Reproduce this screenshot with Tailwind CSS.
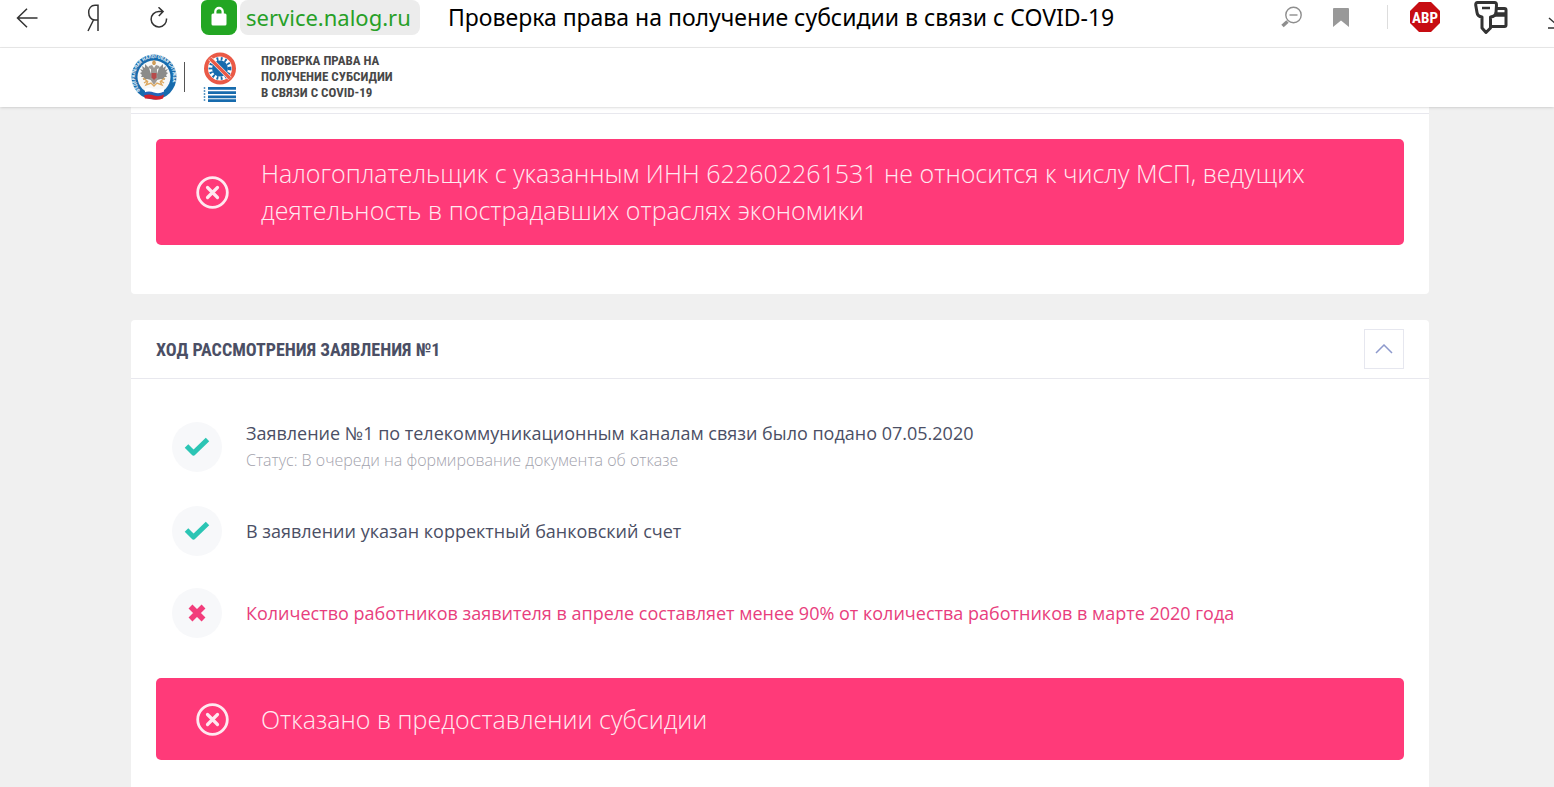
<!DOCTYPE html>
<html lang="ru">
<head>
    <meta charset="UTF-8">
    <meta name="viewport" content="width=device-width, initial-scale=1.0">
    <title>Проверка права на получение субсидии в связи с COVID-19</title>
    <script src="https://cdn.jsdelivr.net/npm/@tailwindcss/browser@4"></script>
</head>
<body class="min-h-screen flex flex-col overflow-x-hidden bg-[#f0f0f0] font-['Open_Sans','Noto_Sans',sans-serif] text-[#4b4f65]">
    <!-- Browser bar -->
    <div class="h-12 shrink-0 flex items-start overflow-hidden bg-white border-b border-[#e9e9e9] font-['Noto_Sans',sans-serif]">
        <div class="w-[201px] shrink-0 h-[35px] flex items-center justify-between pl-4 pr-8 text-[#333]">
            <button type="button" aria-label="Назад">
                <svg class="block" width="22" height="20" viewBox="0 0 22 20" fill="none" stroke="currentColor" stroke-width="1.5"><path d="M21.5 10H1.5M11 .7L1.5 10l9.5 9.300"/></svg>
            </button>
            <button type="button" aria-label="Яндекс">
                <svg class="block" width="14" height="28" viewBox="0 0 14 28" fill="none" stroke="currentColor" stroke-width="1.5"><path d="M11 27V1.200H8C4 1.200 1.700 4.500 1.700 8.500s2.300 7.500 6.300 7.500H11M6.500 16L1 27"/></svg>
            </button>
            <button type="button" aria-label="Обновить">
                <svg class="block" width="20" height="22" viewBox="0 0 20 22" fill="none" stroke="currentColor" stroke-width="1.5"><path d="M17.500 11.500a7.700 7.700 0 1 1-7.700-7h4M9.500 .3l4.600 4.300-4.300 4.500"/></svg>
            </button>
        </div>
        <button type="button" aria-label="Защищённое соединение" class="w-9 h-[35px] shrink-0 flex items-center justify-center rounded-b-lg rounded-t-md bg-[#23a623]">
            <svg class="mb-1" width="16" height="20" viewBox="0 0 16 20"><path d="M4.300 9V5.700a3.700 3.700 0 0 1 7.400 0V9" fill="none" stroke="#fff" stroke-width="2.300"/><rect x=".5" y="7.500" width="15" height="12" rx="1.500" fill="#fff"/></svg>
        </button>
        <a href="#" class="ml-[3px] h-[35px] w-[180px] shrink-0 pl-1.5 rounded-lg bg-[#ececec] text-[#27a027] text-[22px] leading-[35px]">service.nalog.ru</a>
        <span class="ml-7 grow text-[23px] leading-[35px] text-black whitespace-nowrap">Проверка права на получение субсидии в связи с COVID-19</span>
        <div class="h-[34px] shrink-0 flex items-center">
            <button type="button" aria-label="Масштаб" class="w-[22px] mr-[30px]">
                <svg class="block" width="22" height="22" viewBox="0 0 22 22" fill="none" stroke="#8e8e8e"><circle cx="12.500" cy="9" r="7.700" stroke-width="1.400"/><path d="M8.500 9h8" stroke-width="1.400"/><path d="M6.500 15.500l-5 4.500" stroke-width="3.500"/></svg>
            </button>
            <button type="button" aria-label="Закладка" class="w-4 mr-[38px]">
                <svg class="block" width="16" height="20" viewBox="0 0 16 20"><path d="M0 2Q0 1 1 1h14q1 0 1 1V20l-8-6.500L0 20z" fill="#999"/></svg>
            </button>
            <span class="w-px h-6 mr-[22px] bg-[#ddd]"></span>
            <button type="button" aria-label="Adblock Plus" class="w-[30px] mr-[34px]">
                <svg class="block" width="30" height="30" viewBox="0 0 30 30"><path d="M9 0h12l9 9v12l-9 9H9l-9-9V9z" fill="#c70d12"/><text x="15" y="20.500" text-anchor="middle" font-family="Roboto Condensed" font-weight="700" font-size="15" fill="#fff">ABP</text></svg>
            </button>
            <button type="button" aria-label="Пароли и карты" class="w-[34px] mr-10">
                <svg class="block" width="34" height="34" viewBox="0 0 34 34" fill="none" stroke="#333" stroke-width="3" stroke-linejoin="round"><path d="M20 8.500h10.500q1.500 0 1.500 1.500v15q0 1.500-1.500 1.500H17"/><path d="M20 14.500h12" stroke-width="4.500"/><path d="M3.500 2.500h17q2 0 2 2.500l-.5 7.500q-.5 4-5.500 4.500V28l-4.500 4.500L8 28V17q-4.500-.5-5-4.500L1.700 5q0-2.500 1.800-2.500z" fill="#fff"/><path d="M8 8h8" stroke-width="2.500"/></svg>
            </button>
            <button type="button" aria-label="Загрузки" class="w-1.5 overflow-hidden">
                <svg class="block" width="18" height="24" viewBox="0 0 18 24" fill="none" stroke="#333" stroke-width="1.5"><path d="M9 0v18M1 13l8 7 8-7M0 23h18"/></svg>
            </button>
        </div>
    </div>

    <!-- Site header -->
    <header class="relative z-10 h-[59px] shrink-0 flex items-center pl-[131px] pb-0.5 bg-white shadow-sm">
        <a href="#" aria-label="ФНС России" class="shrink-0">
            <svg class="block" width="46" height="48" viewBox="0 0 46 48">
                <defs><path id="ring" d="M9.500 37.500A19 19 0 1 1 36.500 37.500"/></defs>
                <circle cx="23" cy="24" r="22.500" fill="#176bad"/>
                <circle cx="23" cy="24" r="16.500" fill="#f7f7f6"/>
                <text font-family="Roboto Condensed" font-size="5" font-weight="700" fill="#e4f0f8"><textPath href="#ring">ФЕДЕРАЛЬНАЯ НАЛОГОВАЯ СЛУЖБА</textPath></text>
                <!-- eagle -->
                <path d="M20 21l-2-6-4-4 0 4-3-2 1 4-3-1 2 3-2 1 2 2-1 2 3 0-1 3 4-1 4 1zM26 21l2-6 4-4 0 4 3-2-1 4 3-1-2 3 2 1-2 2 1 2-3 0 1 3-4-1-4 1z" fill="#8b8b89"/>
                <path d="M21 12l-3 1-1 2 3 1 0 5-1 5 4 6 4-6-1-5 0-5 3-1-1-2-3-1-2 3z" fill="#9c9996"/>
                <path d="M21 10l1-2.500h2l1 2.500-1 2h-2z" fill="#cf9c58"/>
                <path d="M12 25l4 3-3 2M34 25l-4 3 3 2M17 28l-2 4 5-2 3 3 3-3 5 2-2-4" fill="none" stroke="#dda961" stroke-width="1.400"/>
                <path d="M20.500 20h5v4.500L23 27l-2.500-2.500z" fill="#b64b4b"/>
                <path d="M14 36q4-2 9 0t10-1v5q-5 2-10 0t-9 0z" fill="#fff"/>
                <path d="M13 39.500q5-2 10 0t10-1v4q-5 2-10 0t-10 0z" fill="#2463b8"/>
                <path d="M13 42.500q5-2 10 0t10-1l-1 4q-5 2-9 1t-9-1z" fill="#d2222d"/>
            </svg>
        </a>
        <span class="ml-[7px] w-px h-[30px] bg-[#555]"></span>
        <a href="#" aria-label="COVID-19" class="ml-[18px] shrink-0">
            <svg class="block" width="34" height="50" viewBox="0 0 34 50">
                <circle cx="17" cy="16.500" r="14" fill="#fff" stroke="#ea5a47" stroke-width="4"/>
                <circle cx="17" cy="16.500" r="8" fill="#176bad"/>
                <circle cx="17" cy="16.500" r="9.700" fill="none" stroke="#176bad" stroke-width="3.500" stroke-dasharray="1.800 2.400"/>
                <path d="M7 6.500l20 20" stroke="#fff" stroke-width="4.500"/>
                <path d="M7 6.500l20 20" stroke="#ea5a47" stroke-width="3.200"/>
                <path d="M5 36.300h28M5 40.600h28M5 44.900h28M5 48.700h28" stroke="#176bad" stroke-width="2.700"/>
                <path d="M1.500 35v15" stroke="#5996c4" stroke-width="1.500" stroke-dasharray="2 1"/>
            </svg>
        </a>
        <p class="ml-6 font-['Roboto_Condensed','Roboto',sans-serif] text-[13px] leading-4 font-bold text-[#484848]">ПРОВЕРКА ПРАВА НА<br>ПОЛУЧЕНИЕ СУБСИДИИ<br>В СВЯЗИ С COVID-19</p>
    </header>

    <main class="grow flex flex-col pl-[131px] pr-[125px]">
        <section class="pt-1.5 pb-[49px] bg-white rounded-b">
            <div class="border-t border-[#e8e8ee] px-[25px] pt-[25px]">
                <div class="flex items-center rounded-[5px] bg-[#ff3a79] text-[#ffe9f0] px-10 py-4">
                    <svg class="shrink-0" width="33" height="33" viewBox="0 0 33 33" fill="none" stroke="currentColor"><circle cx="16.500" cy="16.500" r="14.800" stroke-width="2.800"/><path d="M11.500 11.500l10 10m0-10l-10 10" stroke-width="3.200" stroke-linecap="round"/></svg>
                    <p class="ml-8 text-[25px] leading-[37px] font-light">Налогоплательщик с указанным ИНН 622602261531 не относится к числу МСП, ведущих деятельность в пострадавших отраслях экономики</p>
                </div>
            </div>
        </section>

        <section class="mt-[26px] grow bg-white rounded-t">
            <div class="h-[59px] px-[25px] flex items-center justify-between border-b border-[#e8e8ee]">
                <h2 class="font-['Roboto_Condensed','Roboto',sans-serif] text-[18px] font-bold">ХОД РАССМОТРЕНИЯ ЗАЯВЛЕНИЯ №1</h2>
                <button type="button" aria-label="Свернуть" class="size-10 flex items-center justify-center border border-[#e6e7ef]">
                    <svg width="18" height="10" viewBox="0 0 18 10" fill="none" stroke="#8d99cc" stroke-width="1.5"><path d="M1 9l8-8 8 8"/></svg>
                </button>
            </div>
            <div class="px-[25px] pt-[41px] pb-10">
                <ul class="flex flex-col gap-8 px-4 text-[18px]">
                    <li class="flex items-center gap-6">
                        <span class="size-[50px] shrink-0 flex items-center justify-center rounded-full bg-[#f7f8fa]">
                            <svg width="26" height="20" viewBox="0 0 26 20" fill="none" stroke="#2bc5b4" stroke-width="5"><path d="M2.500 9l7 7L23.500 2.500" stroke-linejoin="round"/></svg>
                        </span>
                        <div>
                            <p class="leading-[27px]">Заявление №1 по телекоммуникационным каналам связи было подано 07.05.2020</p>
                            <p class="text-[16px] leading-[27px] font-light text-[#a3a3ad]">Статус: В очереди на формирование документа об отказе</p>
                        </div>
                    </li>
                    <li class="flex items-center gap-6">
                        <span class="size-[50px] shrink-0 flex items-center justify-center rounded-full bg-[#f7f8fa]">
                            <svg width="26" height="20" viewBox="0 0 26 20" fill="none" stroke="#2bc5b4" stroke-width="5"><path d="M2.500 9l7 7L23.500 2.500" stroke-linejoin="round"/></svg>
                        </span>
                        <p>В заявлении указан корректный банковский счет</p>
                    </li>
                    <li class="flex items-center gap-6 text-[#e83e7d]">
                        <span class="size-[50px] shrink-0 flex items-center justify-center rounded-full bg-[#f7f8fa]">
                            <svg width="18" height="18" viewBox="0 0 18 18" fill="none" stroke="#f23d7b" stroke-width="5.500"><path d="M2.500 2.500l13 13m0-13l-13 13"/></svg>
                        </span>
                        <p>Количество работников заявителя в апреле составляет менее 90% от количества работников в марте 2020 года</p>
                    </li>
                </ul>
                <div class="mt-10 h-[82px] flex items-center rounded-[5px] bg-[#ff3a79] text-[#ffe9f0] px-10">
                    <svg class="shrink-0" width="33" height="33" viewBox="0 0 33 33" fill="none" stroke="currentColor"><circle cx="16.500" cy="16.500" r="14.800" stroke-width="2.800"/><path d="M11.500 11.500l10 10m0-10l-10 10" stroke-width="3.200" stroke-linecap="round"/></svg>
                    <p class="ml-8 text-[25px] leading-[37px] font-light">Отказано в предоставлении субсидии</p>
                </div>
            </div>
        </section>
    </main>
</body>
</html>
